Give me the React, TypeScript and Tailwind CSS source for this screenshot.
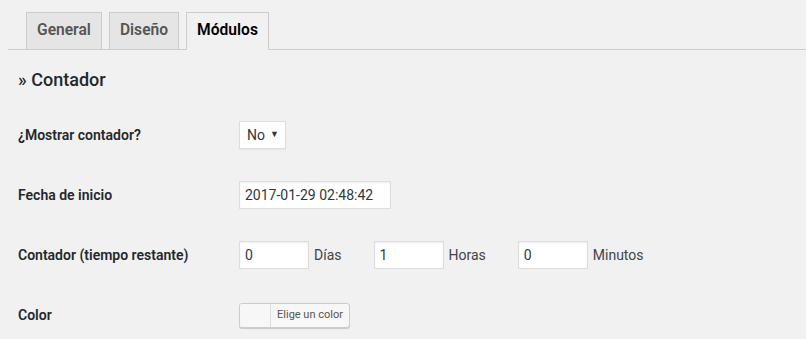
import React from "react";

const font = { fontFamily: 'Roboto, "Noto Sans", sans-serif' };

function Tab({ label, active }: { label: string; active?: boolean }) {
  return (
    <div
      className={
        active
          ? "-mb-px flex h-[38px] items-center border border-[#ccc] border-b-[#f1f1f1] bg-[#f1f1f1] px-[10px] text-[15.6px] font-semibold text-black"
          : "-mb-px flex h-[38px] items-center border border-[#ccc] bg-[#e5e5e5] px-[10px] text-[15.6px] font-semibold text-[#555]"
      }
    >
      {label}
    </div>
  );
}

function Row({ label, children }: { label: string; children: React.ReactNode }) {
  return (
    <div className="flex h-[60px] items-center">
      <div className="w-[221px] text-[14px] font-semibold text-[#23282d]">{label}</div>
      <div className="flex items-center">{children}</div>
    </div>
  );
}

function NumInput({ value, unit }: { value: string; unit: string }) {
  return (
    <div className="mr-[32px] flex items-center">
      <div className="flex h-[28px] w-[70px] items-center border border-[#ddd] bg-white px-[5px] text-[14px] text-[#32373c] shadow-[inset_0_1px_2px_rgba(0,0,0,0.07)]">
        {value}
      </div>
      <span className="ml-[5px] text-[14px] text-[#444]">{unit}</span>
    </div>
  );
}

export default function App() {
  return (
    <div className="h-[339px] w-[806px] overflow-hidden bg-[#f1f1f1]" style={font}>
      <div className="ml-[8px] flex gap-[7px] border-b border-[#ccc] pl-[18px] pt-[12px]">
        <Tab label="General" />
        <Tab label="Diseño" />
        <Tab label="Módulos" active />
      </div>
      <div className="pl-[18px]">
        <h3 className="mt-[18px] h-[24px] text-[18px] font-medium leading-[24px] text-[#23282d]">» Contador</h3>
        <div className="mt-[13px]">
          <Row label="¿Mostrar contador?">
            <div className="flex h-[28px] w-[47px] items-center justify-between border border-[#ddd] bg-white pl-[7px] pr-[6px] text-[14px] text-[#32373c] shadow-[0_1px_1px_rgba(0,0,0,0.04)]">
              <span>No</span>
              <span className="text-[9px]">▼</span>
            </div>
          </Row>
          <Row label="Fecha de inicio">
            <div className="flex h-[28px] w-[152px] items-center border border-[#ddd] bg-white px-[5px] text-[14px] text-[#32373c] shadow-[inset_0_1px_2px_rgba(0,0,0,0.07)]">
              2017-01-29 02:48:42
            </div>
          </Row>
          <Row label="Contador (tiempo restante)">
            <NumInput value="0" unit="Días" />
            <NumInput value="1" unit="Horas" />
            <NumInput value="0" unit="Minutos" />
          </Row>
          <Row label="Color">
            <div className="flex h-[25px] w-[111px] overflow-hidden rounded-[3px] border border-[#ccc] bg-[#f7f7f7] shadow-[0_1px_0_#ccc]">
              <div className="w-[31px] border-r border-[#ddd] bg-[#f7f7f7]" />
              <div className="flex flex-1 items-center justify-center text-[11px] text-[#555]">Elige un color</div>
            </div>
          </Row>
        </div>
      </div>
    </div>
  );
}
